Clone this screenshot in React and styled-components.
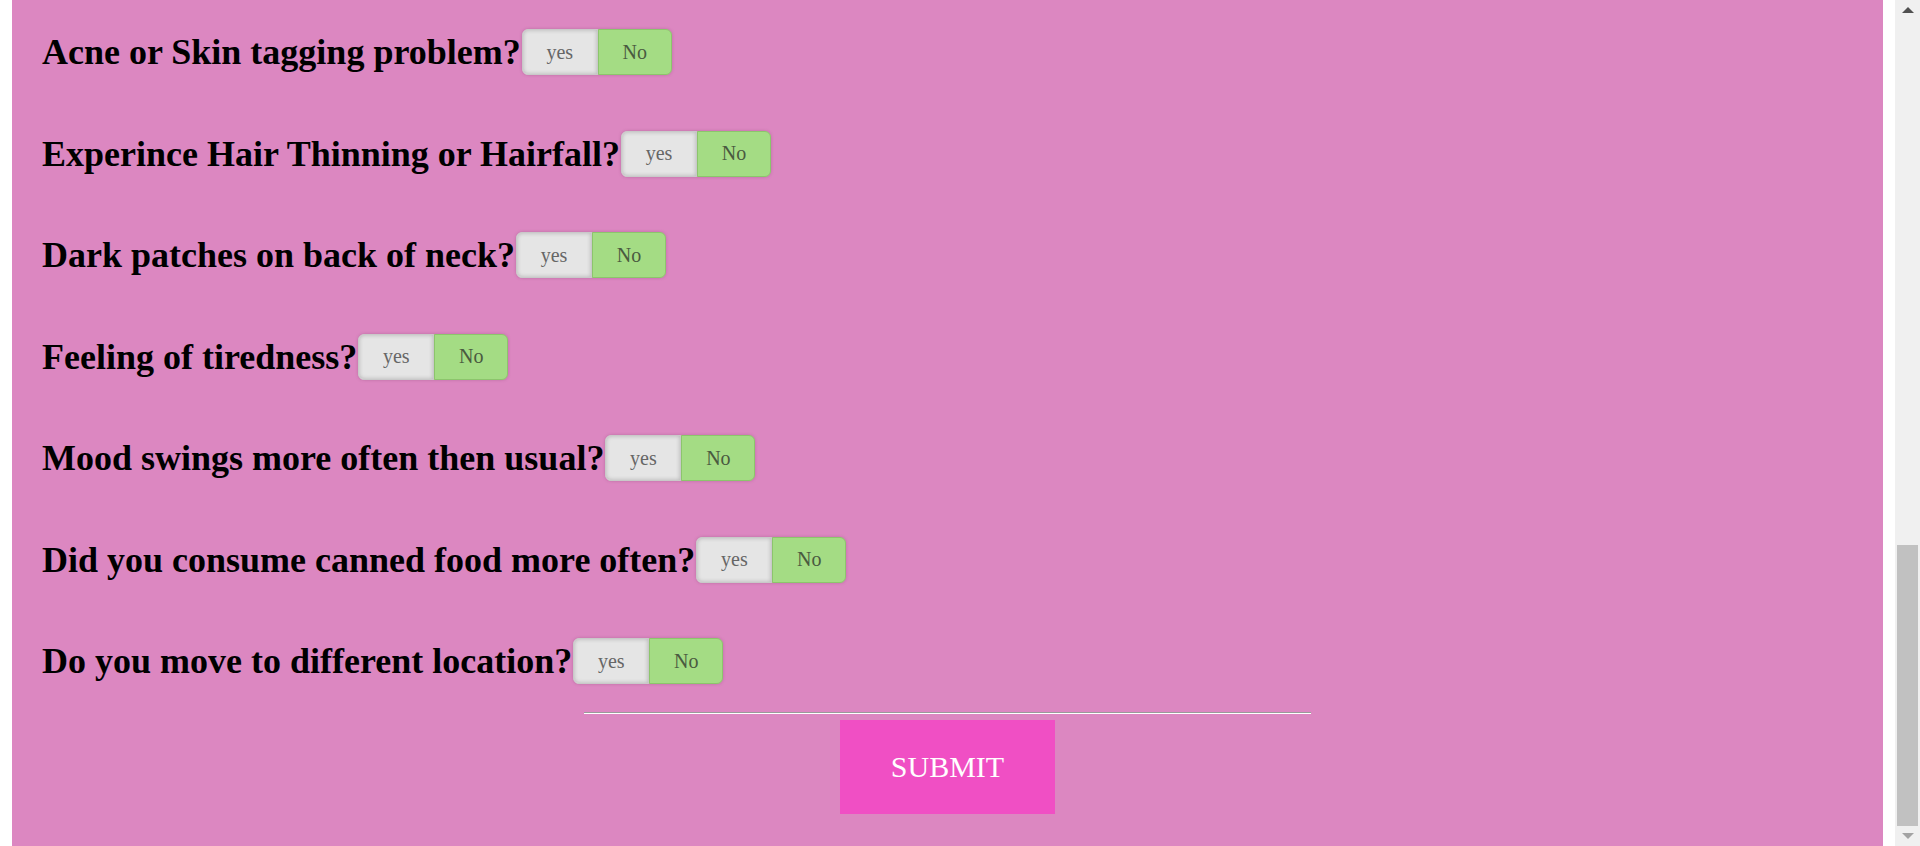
import React from "react";
import styled, { createGlobalStyle } from "styled-components";

const Global = createGlobalStyle`
  html, body { margin: 0; padding: 0; height: 846px; overflow: hidden; background: #ffffff; }
  #root { height: 846px; }
`;

const Page = styled.div`
  display: flex;
  height: 846px;
  background: #ffffff;
`;

const Main = styled.main`
  flex: 1;
  margin-left: 12px;
  background: #dc87c1;
  padding: 29px 0 0 30px;
  display: flex;
  flex-direction: column;
  font-family: "Liberation Serif", "Times New Roman", serif;
`;

const Gutter = styled.div`
  width: 12px;
  background: #ffffff;
`;

const Scrollbar = styled.div`
  width: 25px;
  background: #f0f0f0;
  display: flex;
  flex-direction: column;
  align-items: center;
`;

const Arrow = styled.div`
  height: 20px;
  display: flex;
  align-items: center;
  justify-content: center;
`;

const Track = styled.div`
  flex: 1;
  width: 100%;
  display: flex;
  flex-direction: column;
  justify-content: flex-end;
  align-items: center;
`;

const Thumb = styled.div`
  width: 21px;
  height: 281px;
  background: #c1c1c1;
`;

const Questions = styled.div`
  display: flex;
  flex-direction: column;
  gap: 55.5px;
`;

const Row = styled.div`
  display: flex;
  align-items: center;
  gap: 1px;
  height: 46px;
`;

const Label = styled.h2`
  margin: 0;
  font-size: 36px;
  font-weight: bold;
  color: #000;
  white-space: nowrap;
`;

const Toggle = styled.div`
  display: flex;
  height: 46px;
  border-radius: 6px;
  box-shadow: 0 0 3px rgba(120, 60, 100, 0.35);
`;

const Option = styled.span`
  display: flex;
  align-items: center;
  justify-content: center;
  box-sizing: border-box;
  width: ${(p) => (p.$active ? "74px" : "76px")};
  font-size: 20px;
  color: ${(p) => (p.$active ? "#4a5a40" : "#666666")};
  background: ${(p) => (p.$active ? "#a4dc84" : "#e5e5e5")};
  border: 1px solid ${(p) => (p.$active ? "#8cc56c" : "#c9c9c9")};
  border-radius: ${(p) => (p.$active ? "0 6px 6px 0" : "6px 0 0 6px")};
  box-shadow: ${(p) =>
    p.$active ? "none" : "inset 0 0 4px rgba(0, 0, 0, 0.22)"};
`;

const Footer = styled.div`
  display: flex;
  flex-direction: column;
  align-items: center;
  margin-top: 28px;
  margin-left: -30px;
`;

const Divider = styled.hr`
  width: 727px;
  margin: 0;
  border: 0;
  border-top: 1.5px solid #9a9a9a;
  border-bottom: 1.5px solid #ffffff;
  height: 0;
`;

const Submit = styled.button`
  margin-top: 6px;
  width: 215px;
  height: 94px;
  border: 0;
  background: #f04fc4;
  color: #ffffff;
  font-family: "Liberation Serif", "Times New Roman", serif;
  font-size: 30px;
  padding: 0;
  cursor: pointer;
`;

const questions = [
  "Acne or Skin tagging problem?",
  "Experince Hair Thinning or Hairfall?",
  "Dark patches on back of neck?",
  "Feeling of tiredness?",
  "Mood swings more often then usual?",
  "Did you consume canned food more often?",
  "Do you move to different location?",
];

export default function App() {
  return (
    <>
      <Global />
      <Page>
        <Main>
          <Questions>
            {questions.map((q) => (
              <Row key={q}>
                <Label>{q}</Label>
                <Toggle>
                  <Option>yes</Option>
                  <Option $active>No</Option>
                </Toggle>
              </Row>
            ))}
          </Questions>
          <Footer>
            <Divider />
            <Submit>SUBMIT</Submit>
          </Footer>
        </Main>
        <Gutter />
        <Scrollbar>
          <Arrow>
            <svg width="12" height="7" viewBox="0 0 12 7">
              <polygon points="6,0 12,6 0,6" fill="#505050" />
            </svg>
          </Arrow>
          <Track>
            <Thumb />
          </Track>
          <Arrow>
            <svg width="12" height="7" viewBox="0 0 12 7">
              <polygon points="0,0 12,0 6,6" fill="#a3a3a3" />
            </svg>
          </Arrow>
        </Scrollbar>
      </Page>
    </>
  );
}
